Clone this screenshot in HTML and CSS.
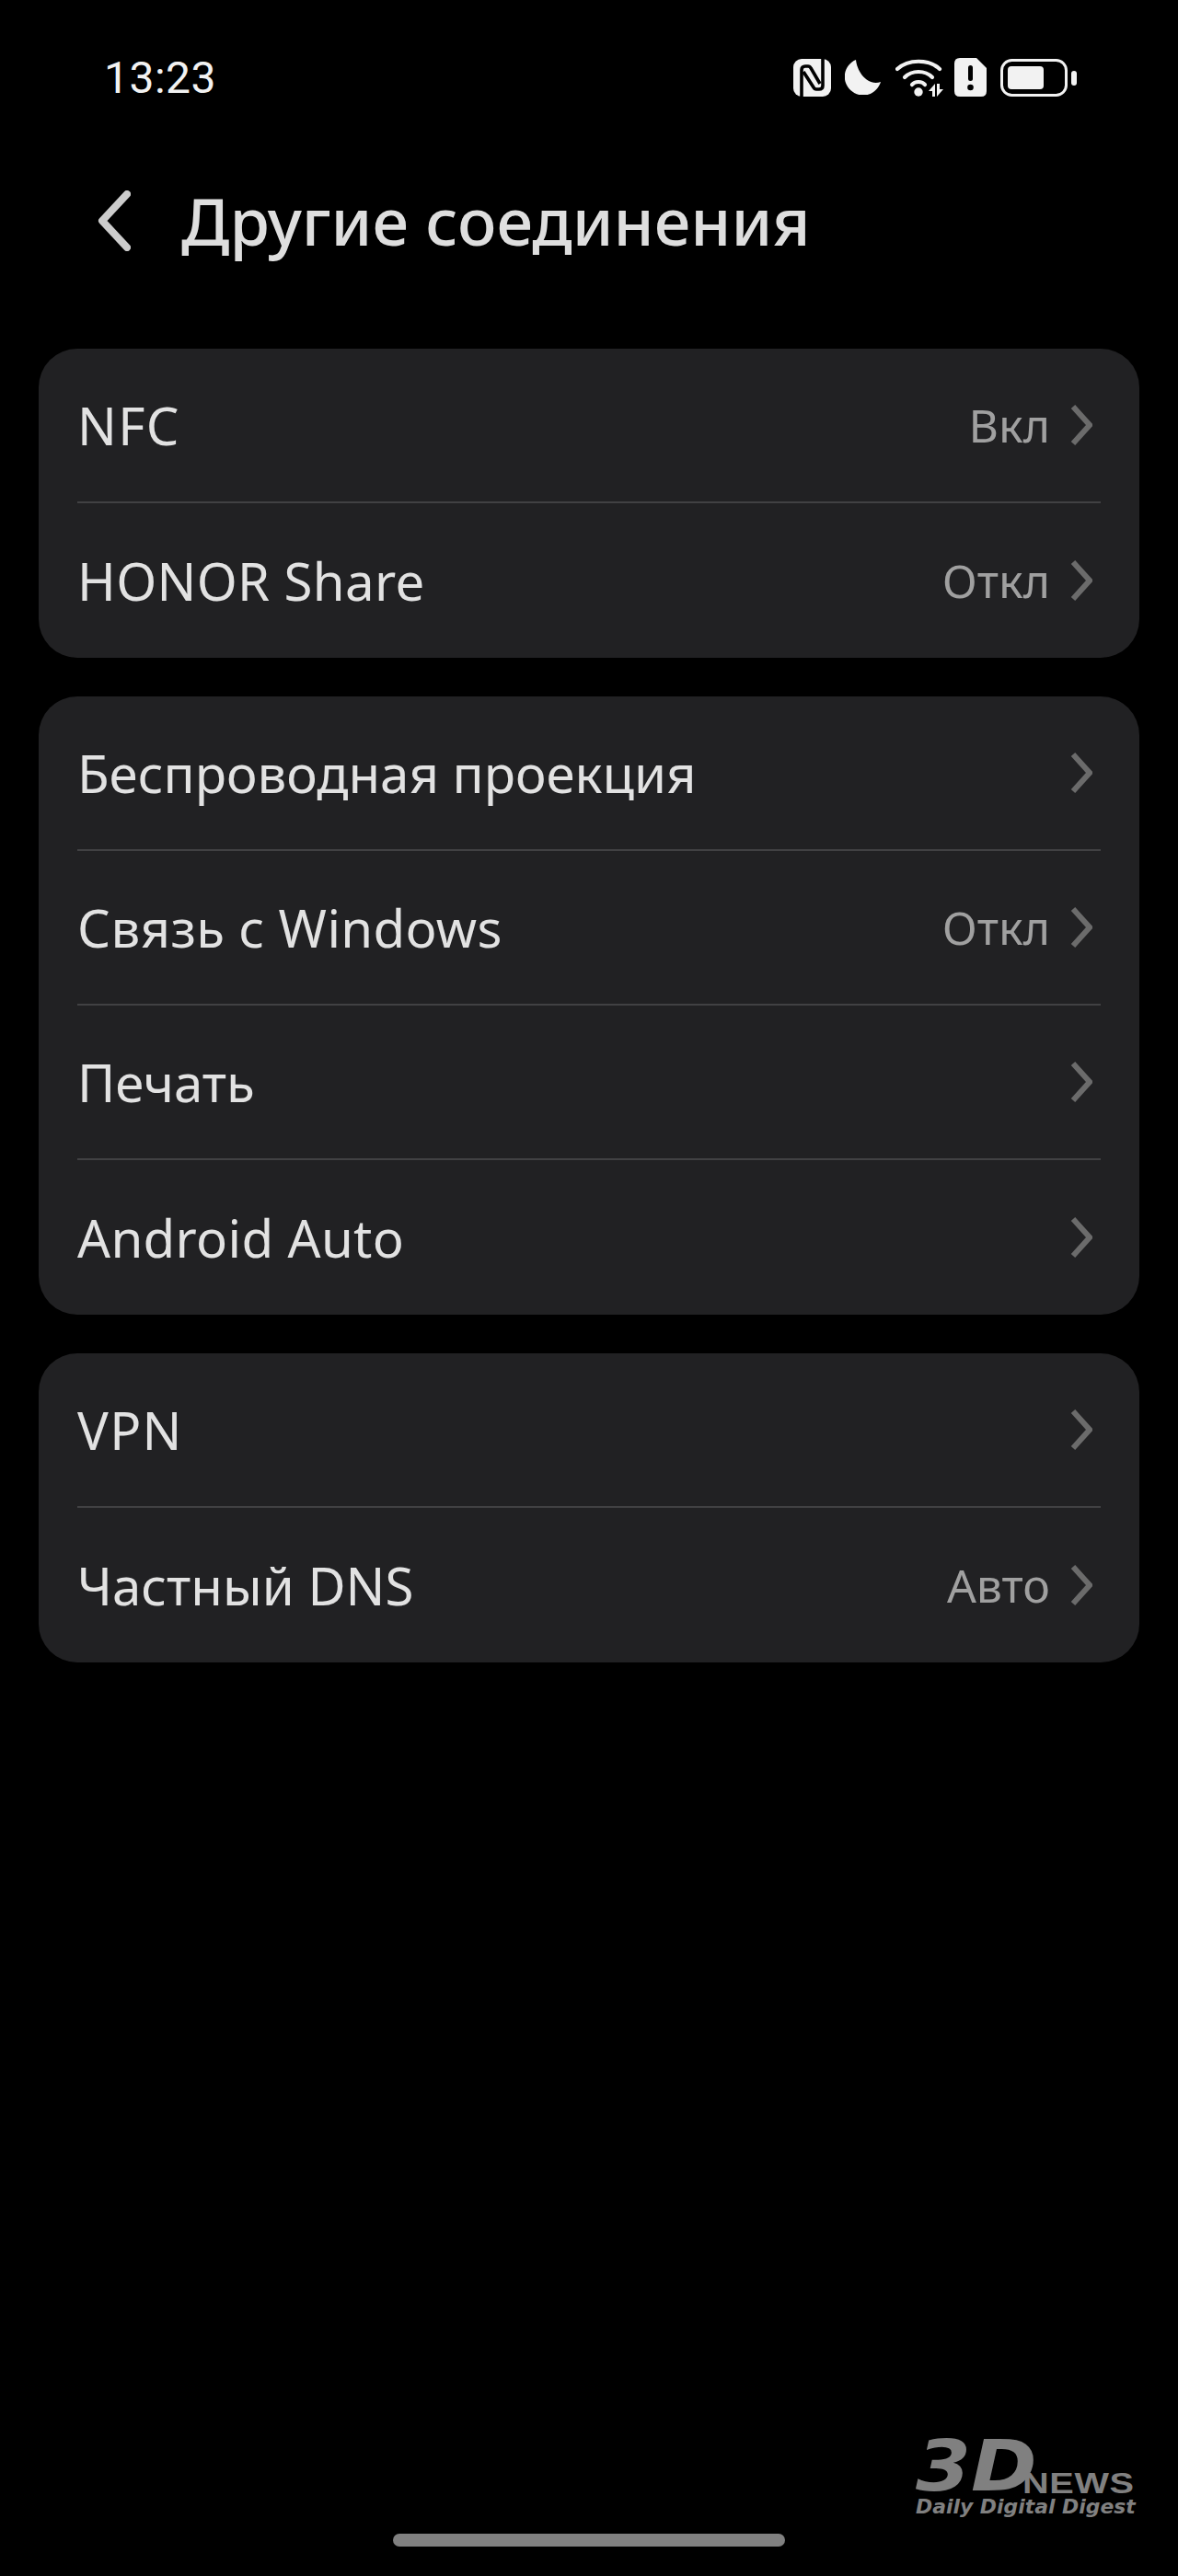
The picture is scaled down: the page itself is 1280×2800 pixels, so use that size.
FILE: index.html
```html
<!DOCTYPE html>
<html lang="ru">
<head>
<meta charset="utf-8">
<title>Другие соединения</title>
<link rel="stylesheet" href="styles.css">
</head>
<body>
<div class="page">
  <div class="status">
    <span class="time">13:23</span>
    <div class="icons">
      <svg class="ic-nfc" width="41" height="41" viewBox="0 0 41 41"><rect width="41" height="41" rx="9" fill="#f2f2f2"/><path d="M9 41V12q0-4 4-4h3q2 0 3 2l10 17" fill="none" stroke="#000" stroke-width="3.600"/><path d="M32 0V29q0 4-4 4h-3q-2 0-3-2L11 14" fill="none" stroke="#000" stroke-width="3.600"/></svg>
      <svg class="ic-moon" width="40" height="38" viewBox="0 0 40 38"><path d="M12 0C13 12 24 29 39 24A20 20 0 1 1 12 0Z" fill="#f2f2f2"/></svg>
      <svg class="ic-wifi" width="52" height="41" viewBox="0 0 52 41"><g fill="none" stroke="#f2f2f2" stroke-width="4.200" stroke-linecap="round"><path d="M2 11C14 0 36 0 48 11"/><path d="M10 20C18 12 32 12 40 20"/><path d="M18 28C21 24 29 24 32 28"/></g><circle cx="25" cy="36" r="4.700" fill="#f2f2f2"/><path d="M36 35L43 27V41H40V35ZM45 27H48V33H52L45 41Z" fill="#f2f2f2"/></svg>
      <svg class="ic-sim" width="35" height="42" viewBox="0 0 35 42"><path d="M6 0H24L35 11V36Q35 42 29 42H6Q0 42 0 36V6Q0 0 6 0Z" fill="#f2f2f2"/><rect x="15" y="8" width="5" height="17" rx="2.500" fill="#000"/><circle cx="17.500" cy="32" r="3.300" fill="#000"/></svg>
      <svg class="ic-bat" width="83" height="41" viewBox="0 0 83 41"><rect x="1.500" y="1.500" width="70" height="38" rx="11" fill="none" stroke="#f2f2f2" stroke-width="3"/><rect x="8" y="8" width="39" height="25" rx="4" fill="#f2f2f2"/><rect x="77" y="13" width="6" height="16" rx="3" fill="#f2f2f2"/></svg>
    </div>
  </div>

  <header class="head">
    <svg class="back" width="36" height="66" viewBox="0 0 36 66"><path d="M32 4L5 33L32 62" fill="none" stroke="#cccccc" stroke-width="8" stroke-linejoin="round" stroke-linecap="round"/></svg>
    <h1 class="title">Другие соединения</h1>
  </header>

  <main class="groups">
    <section class="card">
      <div class="row"><span class="label latin nfc">NFC</span><span class="value">Вкл</span><svg class="chev" width="24" height="46" viewBox="0 0 24 46"><path d="M3 3L21 23L3 43" fill="none" stroke="#6b6b6b" stroke-width="6"/></svg></div>
      <div class="row"><span class="label latin">HONOR Share</span><span class="value">Откл</span><svg class="chev" width="24" height="46" viewBox="0 0 24 46"><path d="M3 3L21 23L3 43" fill="none" stroke="#6b6b6b" stroke-width="6"/></svg></div>
    </section>
    <section class="card">
      <div class="row"><span class="label">Беспроводная проекция</span><svg class="chev" width="24" height="46" viewBox="0 0 24 46"><path d="M3 3L21 23L3 43" fill="none" stroke="#6b6b6b" stroke-width="6"/></svg></div>
      <div class="row"><span class="label latin">Связь с Windows</span><span class="value">Откл</span><svg class="chev" width="24" height="46" viewBox="0 0 24 46"><path d="M3 3L21 23L3 43" fill="none" stroke="#6b6b6b" stroke-width="6"/></svg></div>
      <div class="row"><span class="label">Печать</span><svg class="chev" width="24" height="46" viewBox="0 0 24 46"><path d="M3 3L21 23L3 43" fill="none" stroke="#6b6b6b" stroke-width="6"/></svg></div>
      <div class="row"><span class="label latin">Android Auto</span><svg class="chev" width="24" height="46" viewBox="0 0 24 46"><path d="M3 3L21 23L3 43" fill="none" stroke="#6b6b6b" stroke-width="6"/></svg></div>
    </section>
    <section class="card">
      <div class="row"><span class="label latin nfc">VPN</span><svg class="chev" width="24" height="46" viewBox="0 0 24 46"><path d="M3 3L21 23L3 43" fill="none" stroke="#6b6b6b" stroke-width="6"/></svg></div>
      <div class="row"><span class="label">Частный DNS</span><span class="value">Авто</span><svg class="chev" width="24" height="46" viewBox="0 0 24 46"><path d="M3 3L21 23L3 43" fill="none" stroke="#6b6b6b" stroke-width="6"/></svg></div>
    </section>
  </main>

  <div class="home"></div>

  <div class="mark">
    <div class="mark-top"><span class="mark-3d">3D</span><span class="mark-news">NEWS</span></div>
    <div class="mark-sub">Daily Digital Digest</div>
  </div>
</div>
</body>
</html>
```
FILE: styles.css
```css
* { box-sizing: border-box; }
html, body { margin: 0; padding: 0; background: #000; }
.page {
  position: relative;
  width: 1280px;
  height: 2800px;
  display: flex;
  flex-direction: column;
  overflow: hidden;
  background: #000;
  font-family: "Noto Sans", "Liberation Sans", sans-serif;
}
.status {
  height: 80px;
  margin-top: 44px;
  padding: 0 110px 0 113px;
  display: flex;
  align-items: center;
  justify-content: space-between;
}
.time {
  font-family: Roboto, "Liberation Sans", sans-serif;
  font-size: 48px;
  color: #f2f2f2;
  letter-spacing: 0.5px;
}
.icons { display: flex; align-items: center; }
.icons svg { display: block; }
.ic-nfc { margin-right: 15px; }
.ic-moon { margin-right: 15px; }
.ic-wifi { margin-right: 12px; }
.ic-sim { margin-right: 15px; }
.head {
  height: 232px;
  margin-bottom: 23px;
  padding-left: 106px;
  display: flex;
  align-items: center;
}
.back { margin-right: 55px; display: block; }
.title {
  margin: 0;
  font-size: 70.5px;
  font-weight: 500;
  color: #dedede;
  white-space: nowrap;
}
.groups {
  display: flex;
  flex-direction: column;
  gap: 42px;
  padding: 0 42px;
}
.card {
  background: #212123;
  border-radius: 42px;
  padding: 0 42px;
}
.row {
  height: 168px;
  display: flex;
  align-items: center;
  border-bottom: 2px solid #414143;
  padding-right: 9px;
}
.row:last-child { border-bottom: 0; }
.label {
  flex: 1;
  font-size: 56.4px;
  color: #e2e2e2;
  white-space: nowrap;
}
.latin { letter-spacing: 0.35px; }
.nfc { letter-spacing: 1.3px; }
.value {
  font-size: 50px;
  color: #a0a0a0;
  margin-right: 22px;
}
.chev { display: block; }
.home {
  width: 426px;
  height: 14px;
  margin: auto auto 32px;
  border-radius: 7px;
  background: #808080;
}
.mark {
  position: absolute;
  left: 995px;
  top: 2650px;
  color: #808080;
  white-space: nowrap;
}
.mark-top { display: flex; align-items: flex-end; height: 62px; }
.mark-3d {
  font-family: "DejaVu Sans", sans-serif;
  font-weight: 700;
  font-style: italic;
  font-size: 77px;
  line-height: 62px;
  transform: scaleX(1.12);
  transform-origin: left bottom;
}
.mark-news {
  font-family: "Liberation Sans", sans-serif;
  font-weight: 700;
  font-size: 31px;
  line-height: 24px;
  letter-spacing: 0.5px;
  margin-left: -2px;
  transform: scaleX(1.28);
  transform-origin: left bottom;
}
.mark-sub {
  font-family: "DejaVu Sans", sans-serif;
  font-weight: 700;
  font-style: italic;
  font-size: 21.9px;
  line-height: 26px;
}
```
